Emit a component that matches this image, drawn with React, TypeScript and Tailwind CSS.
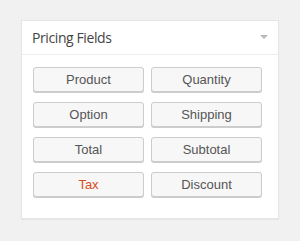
const fields = [
  { label: 'Product' },
  { label: 'Quantity' },
  { label: 'Option' },
  { label: 'Shipping' },
  { label: 'Total' },
  { label: 'Subtotal' },
  { label: 'Tax', active: true },
  { label: 'Discount' },
];

export default function App() {
  return (
    <div className="w-[300px] h-[241px] bg-[#f1f1f1] pt-[20px] pl-[21px]">
      <div className="w-[258px] h-[199px] bg-white border border-[#e5e5e5] shadow-[0_1px_1px_rgba(0,0,0,0.04)]">
        {/* header */}
        <div className="h-[34px] flex items-center justify-between pl-[10px] pr-[10px] border-b border-[#eeeeee]">
          <span
            className="text-[14px] text-[#444] tracking-[-0.4px] mb-[1px]"
            style={{ fontFamily: "'Open Sans', 'Liberation Sans', sans-serif" }}
          >
            Pricing Fields
          </span>
          <svg width="8" height="4" viewBox="0 0 8 4" className="mb-[1px]">
            <path d="M0 0 L8 0 L4 4 Z" fill="#b4b9be" />
          </svg>
        </div>

        {/* buttons */}
        <div className="grid grid-cols-[111px_111px] gap-x-[7px] gap-y-[10px] pt-[12px] pl-[11px]">
          {fields.map((f) => (
            <button
              key={f.label}
              className={
                'h-[25px] rounded-[3px] border border-[#cccccc] bg-[#f7f7f7] shadow-[0_1px_0_#cccccc] text-[13px] leading-none ' +
                (f.active ? 'text-[#d54e21]' : 'text-[#555]')
              }
              style={{ fontFamily: "'Liberation Sans', Arial, sans-serif" }}
            >
              {f.label}
            </button>
          ))}
        </div>
      </div>
    </div>
  );
}
